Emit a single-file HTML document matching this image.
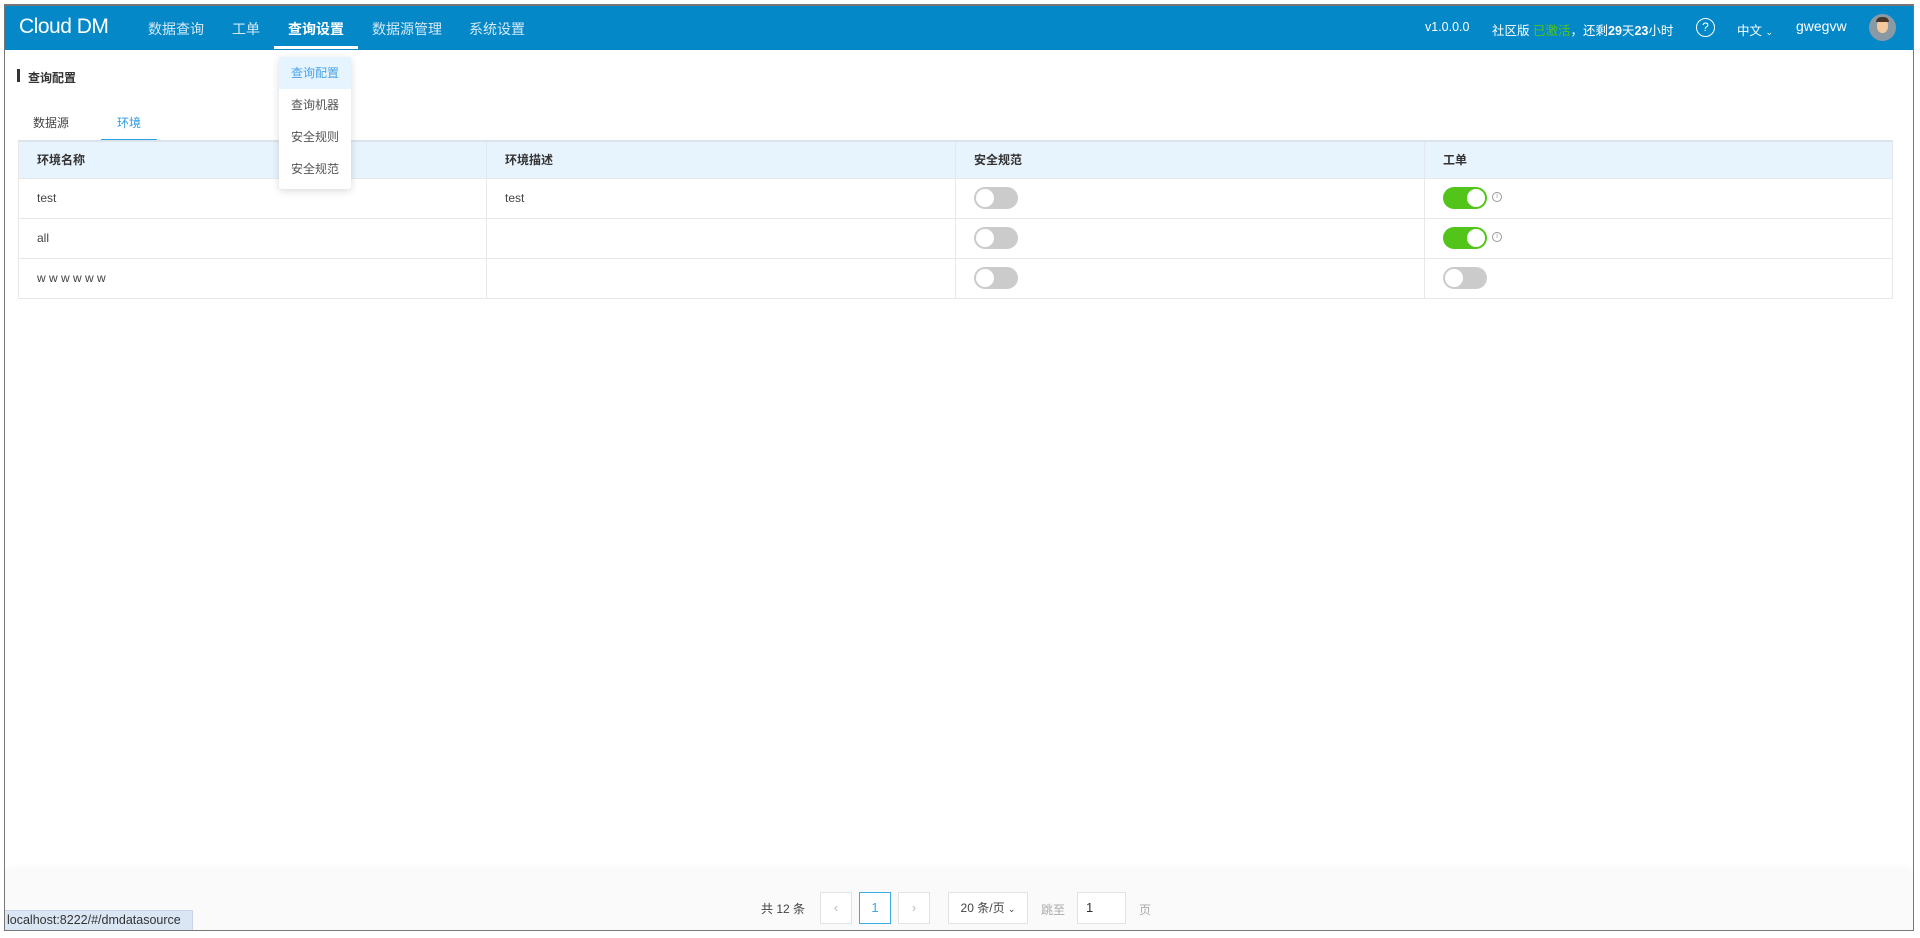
<!DOCTYPE html>
<html><head><meta charset="utf-8">
<style>
*{box-sizing:border-box;margin:0;padding:0}
body{width:1920px;height:938px;background:#fff;font-family:"Liberation Sans","Noto Sans CJK SC",sans-serif;position:relative;overflow:hidden;color:#333}
.frame{position:absolute;left:4px;top:4px;width:1910px;height:927px;border:1px solid #777;border-top:2px solid #777;overflow:hidden;background:#fff}
.hdr{position:absolute;left:0;top:0;width:100%;height:44px;background:#0588c8}
.abs{position:absolute;white-space:nowrap}
.logo{left:14px;top:9px;font-size:21px;color:#fff;letter-spacing:-0.5px;font-weight:500}
.nav{top:13px;font-size:14px;color:#d4e9f5}
.r{font-size:12.5px;color:#fff;top:14px}
.dd{left:274px;top:51px;width:72px;height:132px;background:#fff;box-shadow:0 2px 8px rgba(0,0,0,.15);border-radius:3px}
.dd div{height:32px;line-height:32px;font-size:12px;color:#555;text-align:center}
table{position:absolute;left:13px;top:134px;width:1875px;border-collapse:collapse;font-size:12px;table-layout:fixed}
th{background:#e7f3fd;height:37px;text-align:left;padding-left:18px;font-weight:bold;color:#333;border-right:1px solid #e3e8ee;border-top:2px solid #dde3ea}
td{height:40px;padding-left:18px;border-top:1px solid #e8e8e8;border-right:1px solid #e8e8e8;color:#444}
table{border-left:1px solid #e8e8e8;border-bottom:1px solid #e8e8e8}
.sw{display:inline-block;width:44px;height:22px;border-radius:11px;background:#cbcbcb;position:relative;vertical-align:middle}
.sw::after{content:"";position:absolute;left:2px;top:2px;width:18px;height:18px;border-radius:50%;background:#fff}
.sw.on{background:#52c41a}.sw.on::after{left:24px}
.inf{display:inline-block;width:10px;height:10px;border:1px solid #999;border-radius:50%;font-size:7px;line-height:8px;text-align:center;color:#999;vertical-align:middle;margin-left:5px;position:relative;top:-1px}
.foot{position:absolute;left:0;top:866px;width:100%;height:61px;background:#fafafa;box-shadow:0 -4px 8px rgba(0,0,0,.03)}
.pb{position:absolute;top:20px;height:32px;border:1px solid #e2e2e2;background:#fff;font-size:13px;text-align:center;line-height:30px;color:#bbb}
</style></head><body>
<div class="frame">
<div class="hdr">
<div class="abs logo">Cloud DM</div>
<div class="abs nav" style="left:143px">数据查询</div>
<div class="abs nav" style="left:227px">工单</div>
<div class="abs nav" style="left:283px;color:#fff;font-weight:bold">查询设置</div>
<div class="abs" style="left:269px;top:40px;width:84px;height:3px;background:#fff"></div>
<div class="abs nav" style="left:367px">数据源管理</div>
<div class="abs nav" style="left:464px">系统设置</div>
<div class="abs r" style="left:1420px">v1.0.0.0</div>
<div class="abs r" style="left:1487px">社区版 <span style="color:#52c41a">已激活</span>，还剩<b>29</b>天<b>23</b>小时</div>
<div class="abs" style="left:1691px;top:12px;width:19px;height:19px;border:1.5px solid #fff;border-radius:50%;color:#fff;font-size:12px;text-align:center;line-height:16px">?</div>
<div class="abs r" style="left:1732px">中文 <span style="font-size:9px">&#8964;</span></div>
<div class="abs r" style="left:1791px;font-size:14px;top:12px">gwegvw</div>
<div class="abs" style="left:1864px;top:8px;width:27px;height:27px;border-radius:50%;background:#8a9aa5;overflow:hidden"><div style="position:absolute;left:8px;top:5px;width:11px;height:14px;border-radius:45%;background:#f4c9a0"></div><div style="position:absolute;left:7px;top:3px;width:13px;height:5px;border-radius:5px 5px 0 0;background:#4a3526"></div></div>
</div>
<div class="abs" style="left:12px;top:63px;width:3px;height:13px;background:#333"></div>
<div class="abs" style="left:23px;top:63px;font-size:12px;font-weight:bold;color:#333">查询配置</div>
<div class="abs" style="left:28px;top:108px;font-size:12px;color:#444">数据源</div>
<div class="abs" style="left:112px;top:108px;font-size:12px;color:#2a9be0">环境</div>
<div class="abs" style="left:96px;top:133px;width:56px;height:2px;background:#2aa0e0"></div>
<table>
<colgroup><col style="width:468px"><col style="width:469px"><col style="width:469px"><col></colgroup>
<tr><th>环境名称</th><th>环境描述</th><th>安全规范</th><th>工单</th></tr>
<tr><td>test</td><td>test</td><td><span class="sw"></span></td><td><span class="sw on"></span><span class="inf">i</span></td></tr>
<tr><td>all</td><td></td><td><span class="sw"></span></td><td><span class="sw on"></span><span class="inf">i</span></td></tr>
<tr><td>w w w w w w</td><td></td><td><span class="sw"></span></td><td><span class="sw"></span></td></tr>
</table>
<div class="abs dd"><div style="background:#e6f4ff;color:#4aa3e6">查询配置</div><div>查询机器</div><div>安全规则</div><div>安全规范</div></div>
<div class="foot">
<div class="abs" style="left:756px;top:28px;font-size:12px;color:#444">共 12 条</div>
<div class="pb" style="left:815px;width:32px">&lsaquo;</div>
<div class="pb" style="left:854px;width:32px;border-color:#3aa9e5;color:#3aa9e5">1</div>
<div class="pb" style="left:893px;width:32px">&rsaquo;</div>
<div class="pb" style="left:943px;width:80px;color:#444;font-size:12px">20 条/页 <span style="font-size:9px">&#8964;</span></div>
<div class="abs" style="left:1036px;top:29px;font-size:12px;color:#aaa">跳至</div>
<div class="pb" style="left:1072px;width:49px;color:#333;text-align:left;padding-left:8px">1</div>
<div class="abs" style="left:1134px;top:29px;font-size:12px;color:#aaa">页</div>
</div>
<div class="abs" style="left:0;top:904px;width:188px;height:20px;background:#dbe6f4;border:1px solid #c8d6ea;border-left:none;border-bottom:none;font-size:12.5px;color:#333;line-height:19px;padding-left:2px">localhost:8222/#/dmdatasource</div>
</div>
</body></html>
